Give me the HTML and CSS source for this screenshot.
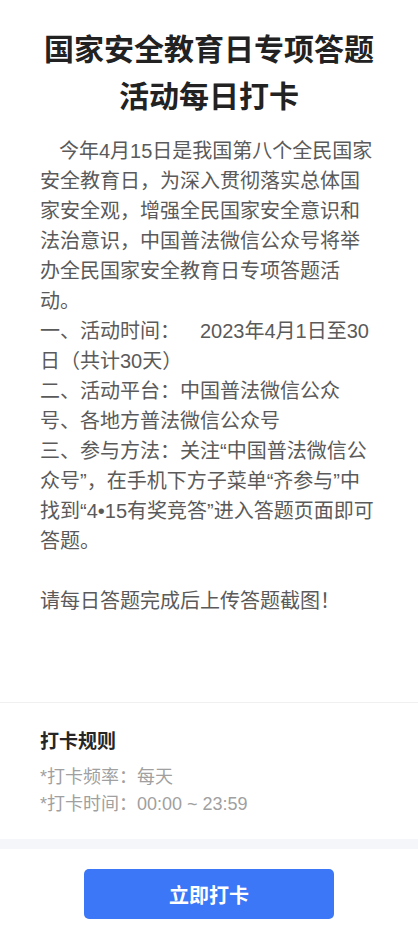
FILE: index.html
```html
<!DOCTYPE html>
<html lang="zh-CN">
<head>
<meta charset="utf-8">
<meta name="viewport" content="width=device-width, initial-scale=1">
<title>国家安全教育日专项答题活动每日打卡</title>
<link rel="stylesheet" href="styles.css">
</head>
<body>
<main class="page">
  <section class="article">
    <h1 class="title">国家安全教育日专项答题活动每日打卡</h1>
    <div class="content">
      <p class="lead">今年4月15日是我国第八个全民国家安全教育日，为深入贯彻落实总体国家安全观，增强全民国家安全意识和法治意识，中国普法微信公众号将举办全民国家安全教育日专项答题活动。</p>
      <p>一、活动时间：　2023年4月1日至30日（共计30天）</p>
      <p>二、活动平台：中国普法微信公众号、各地方普法微信公众号</p>
      <p>三、参与方法：关注“中国普法微信公众号”，在手机下方子菜单“齐参与”中找到“4•15有奖竞答”进入答题页面即可答题。</p>
      <p class="blank">&nbsp;</p>
      <p>请每日答题完成后上传答题截图！</p>
    </div>
  </section>
  <section class="rules">
    <h2 class="rules-title">打卡规则</h2>
    <ul class="rules-list">
      <li>*打卡频率：每天</li>
      <li>*打卡时间：00:00 ~ 23:59</li>
    </ul>
  </section>
  <div class="band"></div>
  <footer class="footer">
    <button class="btn" type="button">立即打卡</button>
  </footer>
</main>
</body>
</html>
```
FILE: styles.css
```css
html, body {
  margin: 0;
  padding: 0;
  background: #ffffff;
}
body {
  font-family: "Liberation Sans", "Noto Sans CJK SC", sans-serif;
  -webkit-font-smoothing: antialiased;
  text-spacing-trim: space-all;
}
.page {
  width: 100%;
}
.article {
  padding: 24px 40px 86px;
  border-bottom: 1px solid #f0f0f2;
}
.title {
  margin: 0;
  font-family: "Noto Sans CJK SC", sans-serif;
  font-size: 30px;
  line-height: 47px;
  font-weight: 700;
  color: #222222;
  text-align: center;
}
.content {
  margin-top: 18px;
  font-size: 20px;
  line-height: 30px;
  color: #5a5a5a;
}
.content p {
  margin: 0;
}
.content .lead {
  text-indent: 19px;
}
.rules {
  padding: 23px 40px 21px;
}
.rules-title {
  margin: 0;
  font-family: "Noto Sans CJK SC", sans-serif;
  font-size: 19px;
  line-height: 28px;
  font-weight: 700;
  color: #262626;
}
.rules-list {
  list-style: none;
  margin: 10px 0 0;
  padding: 0;
  font-size: 18px;
  line-height: 27px;
  color: #a0a0a0;
}
.band {
  height: 10px;
  background: #f5f6fa;
}
.footer {
  display: flex;
  justify-content: center;
  padding: 20px 0;
}
.btn {
  width: 250px;
  height: 50px;
  border: 0;
  border-radius: 5px;
  background: #3b77f6;
  color: #ffffff;
  font-family: "Noto Sans CJK SC", sans-serif;
  font-size: 20px;
  font-weight: 700;
  cursor: pointer;
}
```
